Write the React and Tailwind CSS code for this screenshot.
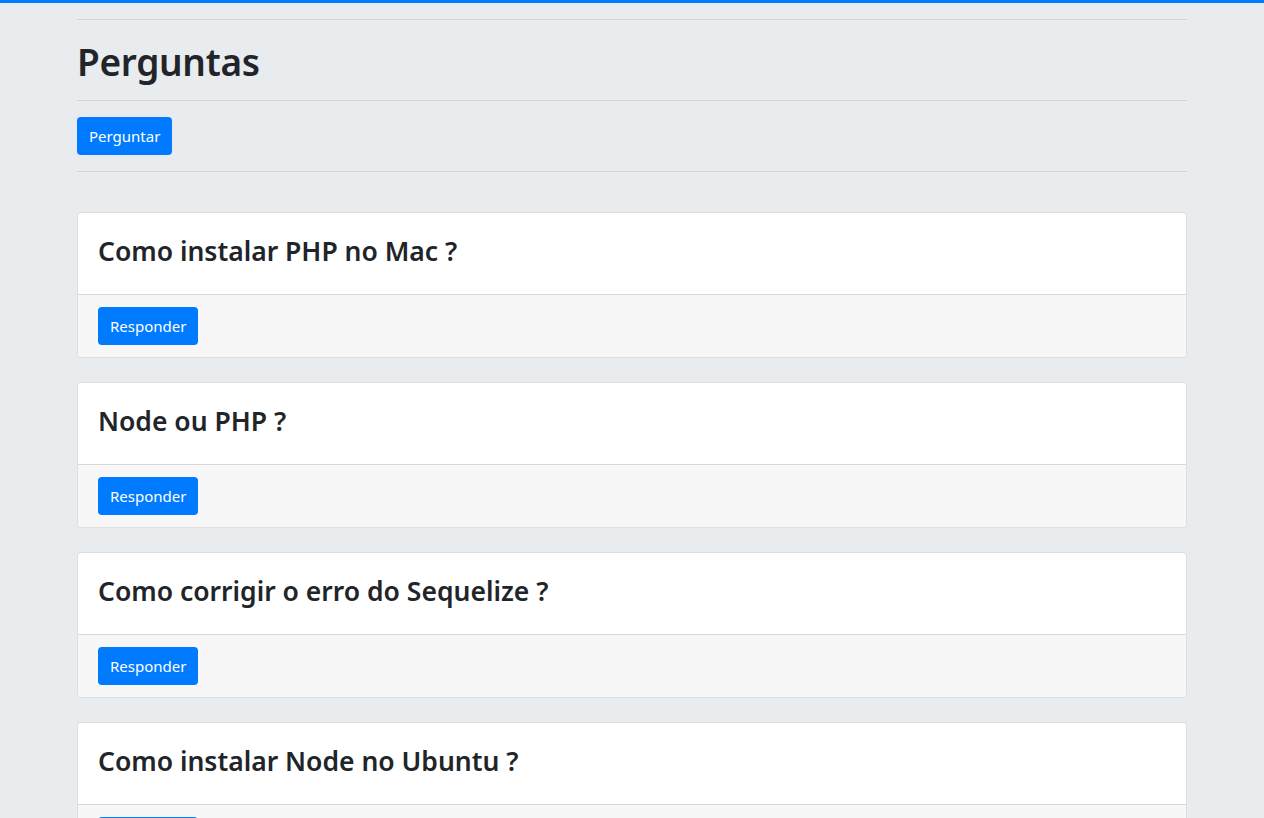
export default function App() {
  const qs = [
    "Como instalar PHP no Mac ?",
    "Node ou PHP ?",
    "Como corrigir o erro do Sequelize ?",
    "Como instalar Node no Ubuntu ?",
  ];
  return (
    <div
      className="min-h-screen bg-[#e9ecef] text-[#212529] border-t-[3px] border-[#007bff]"
      style={{ fontFamily: '"Noto Sans", "Open Sans", Arial, sans-serif' }}
    >
      <div className="w-[1110px] mx-auto">
        <div className="pt-4">
          <div className="border-t border-black/10" />
          <h1 className="mt-[18px] text-[37px] leading-[48px] font-semibold tracking-[-0.3px]">Perguntas</h1>
          <div className="mt-[14px] border-t border-black/10" />
          <button className="mt-4 bg-[#007bff] text-white text-[15px] leading-6 px-3 py-[7px] rounded">
            Perguntar
          </button>
          <div className="mt-4 border-t border-black/10" />
        </div>
        <div className="mt-10 flex flex-col gap-6">
          {qs.map((q) => (
            <div key={q} className="bg-white border border-black/[.125] rounded overflow-hidden">
              <div className="px-5 pt-[22px] pb-[26px]">
                <h3 className="text-[26.5px] leading-[33px] font-semibold">{q}</h3>
              </div>
              <div className="bg-[#f7f7f7] border-t border-black/[.125] px-5 py-3">
                <button className="bg-[#007bff] text-white text-[15px] leading-6 px-3 py-[7px] rounded">
                  Responder
                </button>
              </div>
            </div>
          ))}
        </div>
      </div>
    </div>
  );
}
